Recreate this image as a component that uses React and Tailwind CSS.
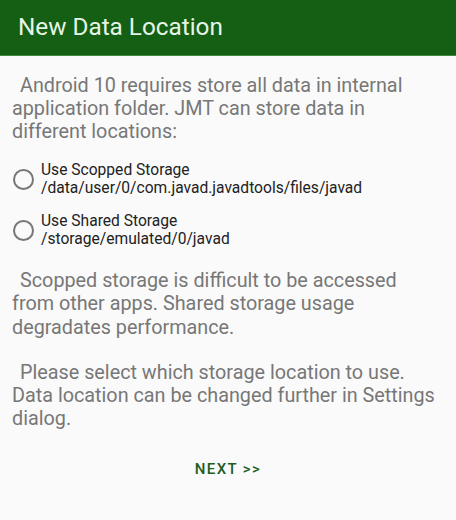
import { useState } from 'react';

const options = [
  { id: 'scoped', title: 'Use Scopped Storage', path: '/data/user/0/com.javad.javadtools/files/javad' },
  { id: 'shared', title: 'Use Shared Storage', path: '/storage/emulated/0/javad' },
];

// lines are broken the same way the dialog breaks them
const intro = ['Android 10 requires store all data in internal', 'application folder. JMT can store data in', 'different locations:'];
const note = ['Scopped storage is difficult to be accessed', 'from other apps. Shared storage usage', 'degradates performance.'];
const hint = ['Please select which storage location to use.', 'Data location can be changed further in Settings', 'dialog.'];

function Radio({ checked }) {
  return (
    <span className="flex h-[21px] w-[21px] shrink-0 items-center justify-center rounded-full border-2 border-[#777777]">
      {checked && <span className="h-[11px] w-[11px] rounded-full bg-[#1b5e20]" />}
    </span>
  );
}

function Para({ lines, className = '' }) {
  return (
    <div className={className}>
      {lines.map((line, i) => (
        <div key={i} className={i === 0 ? 'whitespace-nowrap pl-[8px]' : 'whitespace-nowrap'}>
          {line}
        </div>
      ))}
    </div>
  );
}

export default function App() {
  const [selected, setSelected] = useState(null);

  return (
    <div className="h-[520px] w-[456px] bg-[#fafafa] font-['Roboto',sans-serif]">
      {/* header */}
      <div className="flex h-[56px] items-center border-b border-[#3f8a3f] bg-[#145f14] px-[18px]">
        <h1 className="text-[24.3px] leading-none text-[#e6f4e6]">New Data Location</h1>
      </div>

      <div className="px-[12px] pt-[18px] text-[19.8px] leading-[23px] text-[#777777]">
        <Para lines={intro} />
      </div>

      {/* options */}
      <div className="mt-[19px] flex flex-col gap-[16px] pl-[13px]">
        {options.map((opt) => (
          <button
            key={opt.id}
            onClick={() => setSelected(opt.id)}
            className="flex items-center gap-[7px] text-left"
          >
            <Radio checked={selected === opt.id} />
            <span className="text-[15.6px] leading-[17.5px] text-[#222222]">
              {opt.title}
              <br />
              {opt.path}
            </span>
          </button>
        ))}
      </div>

      <div className="px-[12px] pt-[21px] text-[19.8px] leading-[23.3px] text-[#777777]">
        <Para lines={note} />
        <Para lines={hint} className="mt-[22px]" />
      </div>

      <div className="flex justify-center pt-[27px]">
        <button className="text-[15px] font-medium tracking-[1.4px] text-[#1b5e20]">NEXT &gt;&gt;</button>
      </div>
    </div>
  );
}
